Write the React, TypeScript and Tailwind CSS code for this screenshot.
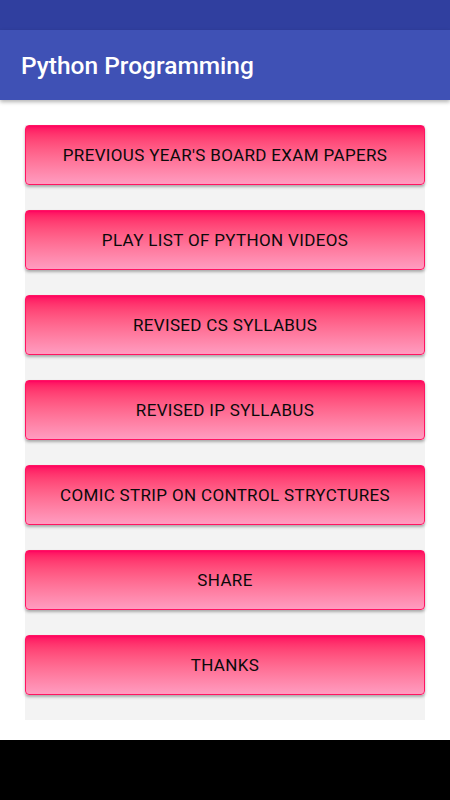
import React from "react";

const items = [
  "PREVIOUS YEAR'S BOARD EXAM PAPERS",
  "PLAY LIST OF PYTHON VIDEOS",
  "REVISED CS SYLLABUS",
  "REVISED IP SYLLABUS",
  "COMIC STRIP ON CONTROL STRYCTURES",
  "SHARE",
  "THANKS",
];

export default function App() {
  return (
    <div className="w-[450px] h-[800px] bg-white flex flex-col overflow-hidden" style={{ fontFamily: "Roboto, 'Noto Sans', sans-serif" }}>
      <div className="h-[30px] bg-[#303F9F] shrink-0" />
      <div className="h-[70px] bg-[#3F51B5] shrink-0 flex items-center pl-[21px] pt-[2px] shadow-[0_2px_4px_rgba(0,0,0,0.3)] relative z-10">
        <span className="text-white text-[24.5px] font-medium leading-none">Python Programming</span>
      </div>
      <div className="flex-1 flex flex-col pt-[25px] px-[25px]">
        <div className="bg-[#F3F3F3] flex flex-col gap-[25px] pb-[25px]">
          {items.map((t) => (
            <div
              key={t}
              className="h-[60px] pt-[2px] rounded-[4px] border border-[#FF1462] bg-gradient-to-b from-[#FF0060] to-[#FF9CC0] flex items-center justify-center text-[17px] tracking-[0.02em] text-[#0a0a0a] shadow-[0_2px_3px_rgba(0,0,0,0.3)]"
            >
              {t}
            </div>
          ))}
        </div>
      </div>
      <div className="h-[60px] bg-black shrink-0" />
    </div>
  );
}
